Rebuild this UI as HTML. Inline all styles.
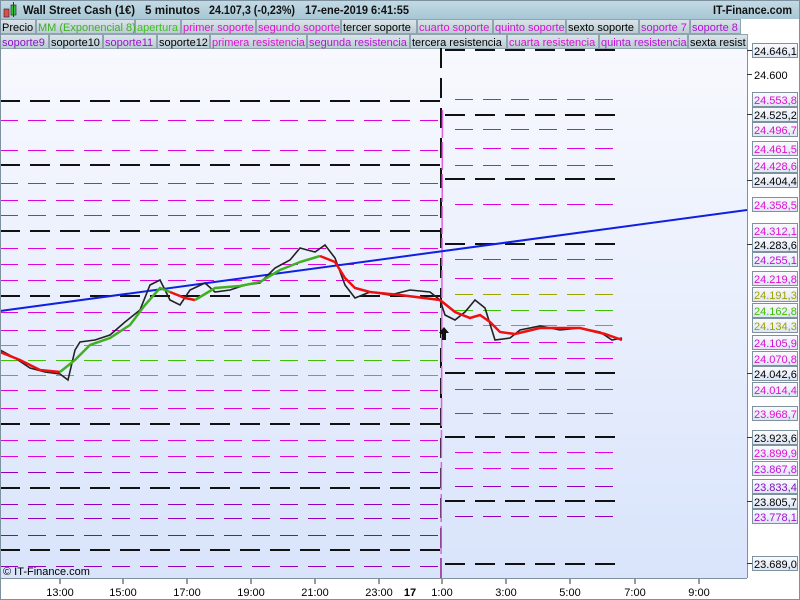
<!DOCTYPE html>
<html><head><meta charset="utf-8"><style>
html,body{margin:0;padding:0;background:#fff;width:800px;height:600px;overflow:hidden;font-family:"Liberation Sans",sans-serif}
</style></head><body>
<svg width="800" height="600" xmlns="http://www.w3.org/2000/svg" font-family="Liberation Sans, sans-serif">
<defs>
<linearGradient id="bg" x1="0" y1="0" x2="0" y2="1"><stop offset="0" stop-color="#f8f9fe"/><stop offset="1" stop-color="#d9e4fb"/></linearGradient>
<linearGradient id="hd" x1="0" y1="0" x2="0" y2="1"><stop offset="0" stop-color="#c4dbe6"/><stop offset="1" stop-color="#a7c6d4"/></linearGradient>
<linearGradient id="tb" x1="0" y1="0" x2="0" y2="1"><stop offset="0" stop-color="#dbe5ea"/><stop offset="1" stop-color="#b9cbd3"/></linearGradient>
<linearGradient id="lb" x1="0" y1="0" x2="0" y2="1"><stop offset="0" stop-color="#fafbfe"/><stop offset="1" stop-color="#dde5f3"/></linearGradient>
</defs>
<rect x="0" y="0" width="800" height="600" fill="#fff"/>
<rect x="0" y="48" width="747" height="530" fill="url(#bg)"/>
<line x1="747.5" y1="48" x2="747.5" y2="578" stroke="#7d919e"/>
<line x1="0" y1="578.5" x2="747" y2="578.5" stroke="#7d919e"/>
<!-- header -->
<rect x="0" y="0" width="800" height="19" fill="url(#hd)"/>
<rect x="4" y="9" width="5" height="8" fill="#e24b4b" stroke="#333" stroke-width="0.7"/>
<rect x="11" y="5" width="5" height="10" fill="#38c038" stroke="#333" stroke-width="0.7"/>
<line x1="13.5" y1="2" x2="13.5" y2="17" stroke="#333"/>
<g font-size="12" font-weight="bold" fill="#111">
<text x="23" y="14" textLength="112" lengthAdjust="spacingAndGlyphs">Wall Street Cash (1€)</text>
<text x="145" y="14" textLength="55" lengthAdjust="spacingAndGlyphs">5 minutos</text>
<text x="209" y="14" textLength="86" lengthAdjust="spacingAndGlyphs">24.107,3 (-0,23%)</text>
<text x="305" y="14" textLength="104" lengthAdjust="spacingAndGlyphs">17-ene-2019 6:41:55</text>
<text x="713" y="14" textLength="79" lengthAdjust="spacingAndGlyphs">IT-Finance.com</text>
</g>
<!-- legend tabs -->
<g font-size="11">
<g stroke="#8fa4ae" fill="url(#tb)">
<rect x="0.5" y="19.5" width="35" height="14"/><rect x="36.5" y="19.5" width="98" height="14"/><rect x="135.5" y="19.5" width="45" height="14"/><rect x="181.5" y="19.5" width="74" height="14"/><rect x="256.5" y="19.5" width="84" height="14"/><rect x="341.5" y="19.5" width="75" height="14"/><rect x="417.5" y="19.5" width="75" height="14"/><rect x="493.5" y="19.5" width="72" height="14"/><rect x="566.5" y="19.5" width="72" height="14"/><rect x="639.5" y="19.5" width="50" height="14"/><rect x="690.5" y="19.5" width="50" height="14"/>
<rect x="0.5" y="34.5" width="48" height="14"/><rect x="49.5" y="34.5" width="53" height="14"/><rect x="103.5" y="34.5" width="53" height="14"/><rect x="157.5" y="34.5" width="52" height="14"/><rect x="210.5" y="34.5" width="96" height="14"/><rect x="307.5" y="34.5" width="102" height="14"/><rect x="410.5" y="34.5" width="96" height="14"/><rect x="507.5" y="34.5" width="91" height="14"/><rect x="599.5" y="34.5" width="88" height="14"/><rect x="688.5" y="34.5" width="59" height="14"/>
</g>
<text y="31"><tspan x="2" fill="#000">Precio</tspan><tspan x="38" fill="#40b020">MM (Exponencial 8)</tspan><tspan x="137" fill="#40c020">apertura</tspan><tspan x="183" fill="#e010d0">primer soporte</tspan><tspan x="258" fill="#e010d0">segundo soporte</tspan><tspan x="343" fill="#000">tercer soporte</tspan><tspan x="419" fill="#e010d0">cuarto soporte</tspan><tspan x="495" fill="#d010d0">quinto soporte</tspan><tspan x="568" fill="#000">sexto soporte</tspan><tspan x="641" fill="#c010d8">soporte 7</tspan><tspan x="692" fill="#b010d8">soporte 8</tspan></text>
<text y="46"><tspan x="2" fill="#9010c8">soporte9</tspan><tspan x="51" fill="#000">soporte10</tspan><tspan x="105" fill="#a010d0">soporte11</tspan><tspan x="159" fill="#000">soporte12</tspan><tspan x="212" fill="#e010d0">primera resistencia</tspan><tspan x="309" fill="#c010d8">segunda resistencia</tspan><tspan x="412" fill="#000">tercera resistencia</tspan><tspan x="509" fill="#e010d0">cuarta resistencia</tspan><tspan x="601" fill="#c010d8">quinta resistencia</tspan><tspan x="690" fill="#000">sexta resist</tspan></text>
</g>
<!-- left thin lines -->
<g stroke-dasharray="18,10" stroke-width="1">
<g stroke="#e000e0"><line x1="0" y1="120.5" x2="440" y2="120.5"/><line x1="0" y1="150.5" x2="440" y2="150.5"/><line x1="0" y1="183.5" x2="440" y2="183.5"/><line x1="0" y1="200.5" x2="440" y2="200.5"/><line x1="0" y1="215.5" x2="440" y2="215.5"/><line x1="0" y1="248.5" x2="440" y2="248.5"/><line x1="0" y1="264.5" x2="440" y2="264.5"/><line x1="0" y1="280.5" x2="440" y2="280.5"/><line x1="0" y1="312.5" x2="440" y2="312.5"/><line x1="0" y1="330.5" x2="440" y2="330.5"/><line x1="0" y1="390.5" x2="440" y2="390.5"/><line x1="0" y1="408.5" x2="440" y2="408.5"/><line x1="0" y1="440.5" x2="440" y2="440.5"/><line x1="0" y1="456.5" x2="440" y2="456.5"/></g>
<g stroke="#9000c0"><line x1="0" y1="472.5" x2="440" y2="472.5"/><line x1="0" y1="504.5" x2="440" y2="504.5"/><line x1="0" y1="518.5" x2="440" y2="518.5"/><line x1="0" y1="535.5" x2="440" y2="535.5"/><line x1="0" y1="566.5" x2="440" y2="566.5"/></g>
<g stroke="#a0a000"><line x1="0" y1="345.5" x2="440" y2="345.5"/><line x1="0" y1="375.5" x2="440" y2="375.5"/></g>
<line x1="0" y1="360.5" x2="440" y2="360.5" stroke="#40c000"/>
</g>
<!-- right thin lines -->
<g stroke-dasharray="18,10" stroke-width="1">
<g stroke="#e000e0"><line x1="455" y1="99.5" x2="617" y2="99.5"/><line x1="455" y1="129.5" x2="617" y2="129.5"/><line x1="455" y1="148.5" x2="617" y2="148.5"/><line x1="455" y1="165.5" x2="617" y2="165.5"/><line x1="455" y1="204.5" x2="617" y2="204.5"/><line x1="455" y1="259.5" x2="617" y2="259.5"/><line x1="455" y1="278.5" x2="617" y2="278.5"/><line x1="455" y1="342.5" x2="617" y2="342.5"/><line x1="455" y1="358.5" x2="617" y2="358.5"/><line x1="455" y1="389.5" x2="617" y2="389.5"/><line x1="455" y1="413.5" x2="617" y2="413.5"/><line x1="455" y1="452.5" x2="617" y2="452.5"/><line x1="455" y1="468.5" x2="617" y2="468.5"/></g>
<g stroke="#9000c0"><line x1="455" y1="486.5" x2="617" y2="486.5"/><line x1="455" y1="516.5" x2="617" y2="516.5"/></g>
<g stroke="#a0a000"><line x1="455" y1="294.5" x2="617" y2="294.5"/><line x1="455" y1="325.5" x2="617" y2="325.5"/></g>
<line x1="455" y1="310.5" x2="617" y2="310.5" stroke="#40c000"/>
</g>
<!-- black dashed -->
<g stroke="#111" stroke-width="2" stroke-dasharray="20,10">
<line x1="0" y1="101" x2="440" y2="101"/><line x1="0" y1="165" x2="440" y2="165"/><line x1="0" y1="231" x2="440" y2="231"/><line x1="0" y1="296" x2="440" y2="296"/><line x1="0" y1="424" x2="440" y2="424"/><line x1="0" y1="488" x2="440" y2="488"/><line x1="0" y1="550" x2="440" y2="550"/>
<line x1="445" y1="50" x2="625" y2="50"/><line x1="445" y1="115" x2="625" y2="115"/><line x1="445" y1="179" x2="625" y2="179"/><line x1="445" y1="244" x2="625" y2="244"/><line x1="445" y1="373" x2="625" y2="373"/><line x1="445" y1="437" x2="625" y2="437"/><line x1="445" y1="501" x2="625" y2="501"/><line x1="445" y1="564" x2="625" y2="564"/>
</g>
<line x1="441" y1="48" x2="441" y2="578" stroke="#111" stroke-width="2" stroke-dasharray="20,10"/>
<line x1="442.5" y1="110" x2="441" y2="578" stroke="#e060e0" stroke-width="1.5" stroke-dasharray="28,4"/>
<!-- blue trend -->
<line x1="0" y1="311" x2="747" y2="210" stroke="#1020e0" stroke-width="2"/>
<!-- price -->
<polyline fill="none" stroke="#222" stroke-width="1.6" points="0,350 15,358 30,368 45,372 60,374 68,380 75,350 80,342 95,340 110,335 125,322 140,310 150,285 160,280 170,300 180,305 190,290 205,283 215,292 230,290 245,285 260,283 275,268 290,260 300,248 315,252 325,245 335,258 345,285 355,298 370,292 390,295 410,290 430,292 440,300 445,315 455,320 465,312 475,300 485,308 495,340 510,338 520,330 540,326 560,330 580,328 600,332 612,340 622,338"/>
<polyline fill="none" stroke="#ee1010" stroke-width="2.5" points="0,352 20,360 40,370 60,372"/>
<polyline fill="none" stroke="#40b020" stroke-width="2.5" points="60,372 75,360 90,345 110,338 130,325 145,305 160,288 170,292"/>
<polyline fill="none" stroke="#ee1010" stroke-width="2.5" points="170,292 185,298 195,300"/>
<polyline fill="none" stroke="#40b020" stroke-width="2.5" points="195,300 215,288 240,286 260,282 280,270 300,262 320,256"/>
<polyline fill="none" stroke="#ee1010" stroke-width="2.5" points="320,256 335,262 345,278 355,288 370,292 400,295 440,300 455,312 470,318 480,315 490,322 500,332 515,334 540,328 580,328 605,334 622,340"/>
<polygon points="439,333 444,327 449,333 446,333 446,340 442,340 442,333" fill="#111"/>
<!-- right axis labels -->
<g font-size="11">
<g stroke="#7d919e" fill="url(#lb)">
<rect x="752.5" y="43.5" width="45" height="14"/><rect x="752.5" y="92.5" width="45" height="14"/><rect x="752.5" y="107.5" width="45" height="14"/><rect x="752.5" y="122.5" width="45" height="14"/><rect x="752.5" y="141.5" width="45" height="14"/><rect x="752.5" y="158.5" width="45" height="14"/><rect x="752.5" y="173.5" width="45" height="14"/><rect x="752.5" y="197.5" width="45" height="14"/><rect x="752.5" y="223.5" width="45" height="14"/><rect x="752.5" y="237.5" width="45" height="14"/><rect x="752.5" y="252.5" width="45" height="14"/><rect x="752.5" y="271.5" width="45" height="14"/><rect x="752.5" y="287.5" width="45" height="14"/><rect x="752.5" y="303.5" width="45" height="14"/><rect x="752.5" y="318.5" width="45" height="14"/><rect x="752.5" y="335.5" width="45" height="14"/><rect x="752.5" y="351.5" width="45" height="14"/><rect x="752.5" y="366.5" width="45" height="14"/><rect x="752.5" y="382.5" width="45" height="14"/><rect x="752.5" y="406.5" width="45" height="14"/><rect x="752.5" y="430.5" width="45" height="14"/><rect x="752.5" y="445.5" width="45" height="14"/><rect x="752.5" y="461.5" width="45" height="14"/><rect x="752.5" y="479.5" width="45" height="14"/><rect x="752.5" y="494.5" width="45" height="14"/><rect x="752.5" y="509.5" width="45" height="14"/><rect x="752.5" y="556.5" width="45" height="14"/>
</g>
<g stroke="#333"><line x1="747" y1="50.5" x2="752" y2="50.5"/><line x1="747" y1="74.5" x2="752" y2="74.5"/><line x1="747" y1="114.5" x2="752" y2="114.5"/><line x1="747" y1="180.5" x2="752" y2="180.5"/><line x1="747" y1="244.5" x2="752" y2="244.5"/><line x1="747" y1="373.5" x2="752" y2="373.5"/><line x1="747" y1="437.5" x2="752" y2="437.5"/><line x1="747" y1="501.5" x2="752" y2="501.5"/><line x1="747" y1="563.5" x2="752" y2="563.5"/></g>
<text x="754" y="55" fill="#000">24.646,1</text>
<text x="754" y="79" fill="#000">24.600</text>
<text x="754" y="104" fill="#e010d0">24.553,8</text>
<text x="754" y="119" fill="#000">24.525,2</text>
<text x="754" y="134" fill="#e010d0">24.496,7</text>
<text x="754" y="153" fill="#e010d0">24.461,5</text>
<text x="754" y="170" fill="#e010d0">24.428,6</text>
<text x="754" y="185" fill="#000">24.404,4</text>
<text x="754" y="209" fill="#e010d0">24.358,5</text>
<text x="754" y="235" fill="#e010d0">24.312,1</text>
<text x="754" y="249" fill="#000">24.283,6</text>
<text x="754" y="264" fill="#c010d8">24.255,1</text>
<text x="754" y="283" fill="#e010d0">24.219,8</text>
<text x="754" y="299" fill="#a0a000">24.191,3</text>
<text x="754" y="315" fill="#40c000">24.162,8</text>
<text x="754" y="330" fill="#a0a000">24.134,3</text>
<text x="754" y="347" fill="#d010d0">24.105,9</text>
<text x="754" y="363" fill="#e010d0">24.070,8</text>
<text x="754" y="378" fill="#000">24.042,6</text>
<text x="754" y="394" fill="#e010d0">24.014,4</text>
<text x="754" y="418" fill="#e010d0">23.968,7</text>
<text x="754" y="442" fill="#000">23.923,6</text>
<text x="754" y="457" fill="#e010d0">23.899,9</text>
<text x="754" y="473" fill="#c010d8">23.867,8</text>
<text x="754" y="491" fill="#8010b8">23.833,4</text>
<text x="754" y="506" fill="#000">23.805,7</text>
<text x="754" y="521" fill="#a010d0">23.778,1</text>
<text x="754" y="568" fill="#000">23.689,0</text>
</g>
<!-- bottom -->
<text x="3" y="575" font-size="11" fill="#000">© IT-Finance.com</text>
<g stroke="#333"><line x1="60" y1="579" x2="60" y2="584"/><line x1="123" y1="579" x2="123" y2="584"/><line x1="187" y1="579" x2="187" y2="584"/><line x1="251" y1="579" x2="251" y2="584"/><line x1="315" y1="579" x2="315" y2="584"/><line x1="379" y1="579" x2="379" y2="584"/><line x1="442" y1="579" x2="442" y2="584"/><line x1="506" y1="579" x2="506" y2="584"/><line x1="570" y1="579" x2="570" y2="584"/><line x1="635" y1="579" x2="635" y2="584"/><line x1="699" y1="579" x2="699" y2="584"/></g>
<g font-size="11" fill="#000" text-anchor="middle">
<text x="60" y="596">13:00</text><text x="123" y="596">15:00</text><text x="187" y="596">17:00</text><text x="251" y="596">19:00</text><text x="315" y="596">21:00</text><text x="379" y="596">23:00</text><text x="410" y="596" font-weight="bold">17</text><text x="442" y="596">1:00</text><text x="506" y="596">3:00</text><text x="570" y="596">5:00</text><text x="635" y="596">7:00</text><text x="699" y="596">9:00</text>
</g>
<rect x="0.5" y="0.5" width="799" height="599" fill="none" stroke="#7d919e"/>
</svg>
</body></html>
